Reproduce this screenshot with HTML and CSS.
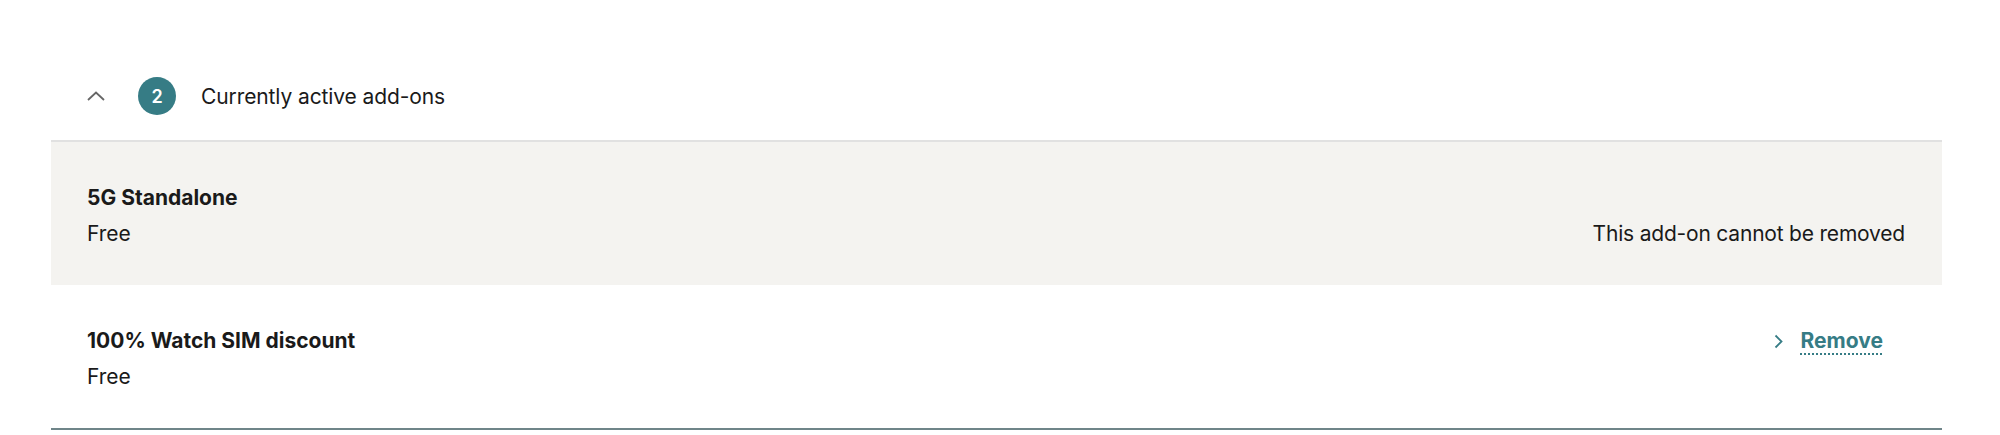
FILE: index.html
```html
<!DOCTYPE html>
<html lang="en">
<head>
<meta charset="utf-8">
<title>Currently active add-ons</title>
<link rel="stylesheet" href="styles.css">
</head>
<body>
<section class="addons">
  <header class="addons-header">
    <svg class="chev-up" width="18" height="10" viewBox="0 0 18 10" aria-hidden="true"><path d="M1 9 L9 1.5 L17 9" fill="none" stroke="#666" stroke-width="1.8"/></svg>
    <span class="badge">2</span>
    <h2 class="addons-title">Currently active add-ons</h2>
  </header>
  <div class="addon addon-locked">
    <div class="addon-info">
      <div class="addon-name">5G Standalone</div>
      <div class="addon-price">Free</div>
    </div>
    <div class="addon-note">This add-on cannot be removed</div>
  </div>
  <div class="addon addon-removable">
    <div class="addon-info">
      <div class="addon-name">100% Watch SIM discount</div>
      <div class="addon-price">Free</div>
    </div>
    <a class="remove-link" href="#">
      <svg class="chev-right" width="9" height="15" viewBox="0 0 9 15" aria-hidden="true"><path d="M1.5 1.5 L7.5 7.5 L1.5 13.5" fill="none" stroke="#367c85" stroke-width="1.8"/></svg>
      <span class="remove-text">Remove</span>
    </a>
  </div>
</section>
</body>
</html>
```
FILE: styles.css
```css
html, body {
  margin: 0;
  padding: 0;
  background: #ffffff;
}
body {
  font-family: Inter, "Noto Sans", sans-serif;
  color: #1a1a1a;
  padding: 52px 58px 0 51px;
}
.addons {
  display: flex;
  flex-direction: column;
}
.addons-header {
  display: flex;
  align-items: center;
  height: 88px;
  padding-left: 36px;
  border-bottom: 2px solid #e1e1e1;
}
.chev-up {
  display: block;
  margin-right: 33px;
}
.badge {
  width: 38px;
  height: 38px;
  border-radius: 50%;
  background: #367c85;
  color: #ffffff;
  display: flex;
  align-items: center;
  justify-content: center;
  font-size: 18px;
  font-weight: 600;
  margin-right: 25px;
}
.addons-title {
  margin: 0;
  font-size: 21px;
  font-weight: 400;
  letter-spacing: -0.1px;
}
.addon {
  display: flex;
  justify-content: space-between;
  padding: 38px 37px 33px 36px;
  font-size: 21px;
  line-height: 36px;
}
.addon-locked {
  background: #f4f3f0;
  align-items: flex-end;
}
.addon-removable {
  align-items: flex-start;
  border-bottom: 2px solid #6f8589;
}
.addon-name {
  font-weight: 700;
}
.addon-note {
  font-weight: 400;
  letter-spacing: -0.2px;
}
.remove-link {
  display: flex;
  align-items: center;
  height: 36px;
  gap: 18px;
  margin-right: 22px;
  color: #367c85;
  text-decoration: none;
  font-weight: 700;
}
.chev-right {
  display: block;
}
.remove-text {
  text-decoration: underline dotted #367c85;
  text-decoration-thickness: 2px;
  text-underline-offset: 5px;
}
```
